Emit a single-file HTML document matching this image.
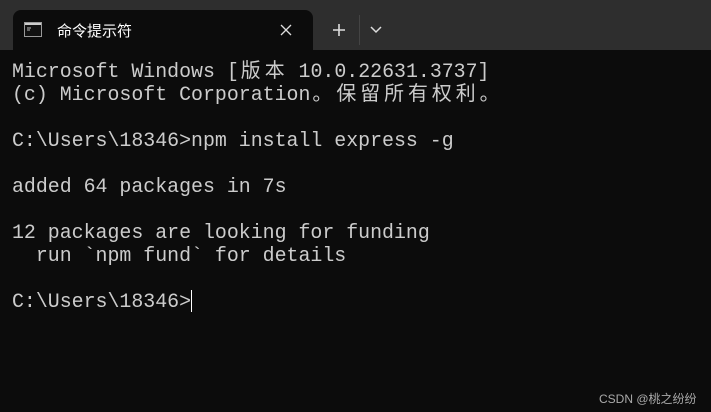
<!DOCTYPE html>
<html><head><meta charset="utf-8"><style>
html,body{margin:0;padding:0;}
body{width:711px;height:412px;background:#0c0c0c;position:relative;overflow:hidden;font-family:"Liberation Mono","Noto Sans CJK SC",monospace;}
.bar{position:absolute;left:0;top:0;width:711px;height:50px;background:#2e2e2e;}
.tab{position:absolute;left:13px;top:10px;width:300px;height:40px;background:#0c0c0c;border-radius:8px 8px 0 0;}
.ttl{position:absolute;left:57px;top:20px;color:#fff;font:15px "Liberation Sans","Noto Sans CJK SC",sans-serif;}
.term{position:absolute;left:12px;top:60px;color:#cccccc;font-size:19.9px;line-height:23px;white-space:pre;}
.c{display:inline-block;width:23.9px;text-align:center;}
.cur{display:inline-block;width:1px;height:22px;background:#fff;vertical-align:-5px;}
.wm{position:absolute;left:599px;top:390px;color:#aaa;font:12px "Liberation Sans","Noto Sans CJK SC",sans-serif;}
</style></head><body>
<div class="bar"></div>
<div class="tab"></div>
<svg style="position:absolute;left:24px;top:22px" width="18" height="15"><rect x="0.5" y="0.5" width="17" height="14" fill="#111" stroke="#999"/><rect x="1" y="1" width="16" height="2" fill="#ccc"/><path d="M3 6h4M3 8h3" stroke="#bbb" stroke-width="1"/></svg>
<div class="ttl">命令提示符</div>
<svg style="position:absolute;left:280px;top:24px" width="12" height="12"><path d="M1 1L11 11M11 1L1 11" stroke="#ddd" stroke-width="1.3"/></svg>
<svg style="position:absolute;left:332px;top:23px" width="14" height="14"><path d="M7 1V13M1 7H13" stroke="#ddd" stroke-width="1.6"/></svg>
<div style="position:absolute;left:359px;top:15px;width:1px;height:30px;background:#444"></div>
<svg style="position:absolute;left:370px;top:26px" width="12" height="8"><path d="M1 1L6 6L11 1" stroke="#ddd" stroke-width="1.5" fill="none"/></svg>
<div class="term">Microsoft Windows [<span class="c">版</span><span class="c">本</span> 10.0.22631.3737]
(c) Microsoft Corporation<span class="c">。</span><span class="c">保</span><span class="c">留</span><span class="c">所</span><span class="c">有</span><span class="c">权</span><span class="c">利</span><span class="c">。</span>

C:\Users\18346&gt;npm install express -g

added 64 packages in 7s

12 packages are looking for funding
  run `npm fund` for details

C:\Users\18346&gt;<span class="cur"></span></div>
<div class="wm">CSDN @桃之纷纷</div>
</body></html>
